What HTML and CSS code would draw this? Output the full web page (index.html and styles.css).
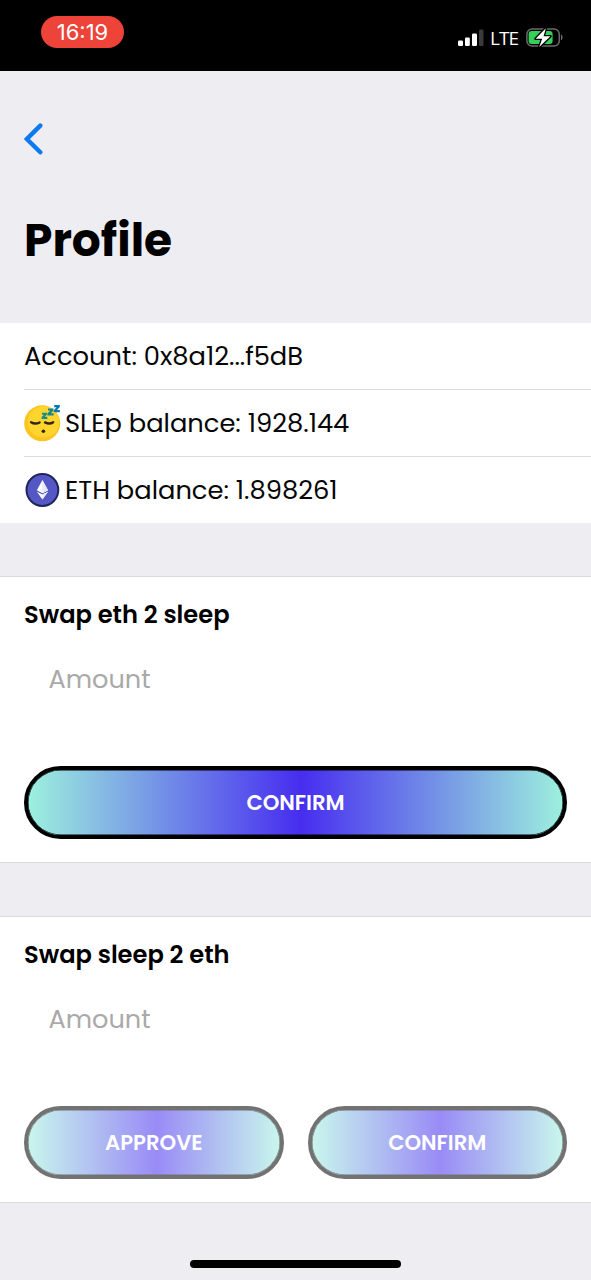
FILE: index.html
```html
<!DOCTYPE html>
<html lang="en">
<head>
<meta charset="utf-8">
<title>Profile</title>
<link rel="stylesheet" href="styles.css">
</head>
<body>
<div class="screen">
  <div class="status">
    <span class="clock">16:19</span>
    <div class="status-right">
      <svg class="signal" width="26" height="18" viewBox="0 0 26 18">
        <rect x="0" y="11.5" width="5" height="5.5" rx="1.2" fill="#fff"/>
        <rect x="7" y="8.5" width="4.8" height="8.5" rx="1.2" fill="#fff"/>
        <rect x="14" y="4.5" width="5" height="12.5" rx="1.2" fill="#fff"/>
        <rect x="21" y="0.5" width="4.5" height="16.5" rx="1.2" fill="#3a3a3c"/>
      </svg>
      <span class="network">LTE</span>
      <svg class="battery" width="38" height="22" viewBox="0 0 38 22">
        <rect x="0.9" y="2" width="32.4" height="17" rx="5.2" fill="none" stroke="#6b6b6e" stroke-width="1.5"/>
        <rect x="2.6" y="4" width="24" height="13" rx="3" fill="#34d058"/>
        <path d="M35.2 7.6c1.7.7 1.7 5 0 5.7z" fill="#8a8a8d"/>
        <path d="M19.8 1.2 9.6 11.7h6.6L13.2 20 24.4 9.2h-6.8z" fill="#fff" stroke="#000" stroke-width="2.6" stroke-linejoin="round" paint-order="stroke"/>
      </svg>
    </div>
  </div>
  <header class="header">
    <svg class="back" width="24" height="36" viewBox="0 0 24 36">
      <path d="M16.3 4.6 2.9 18l13.4 13.3" fill="none" stroke="#0b7af0" stroke-width="4.4" stroke-linecap="round" stroke-linejoin="miter"/>
    </svg>
    <h1 class="title">Profile</h1>
  </header>
  <div class="list">
    <div class="row">Account: 0x8a12...f5dB</div>
    <div class="row">
      <svg class="coin" width="38" height="38" viewBox="0 0 38 38">
        <circle cx="18.2" cy="19.3" r="18" fill="#fdc41f"/>
        <ellipse cx="19.5" cy="17.9" rx="15.8" ry="15.6" fill="#fed52e"/>
        <path d="M7 18.2c2.5 1.5 6.2 1.5 8.6.2M21 18.4c2.6 1.3 6 1.3 8.2-.2" fill="none" stroke="#33251a" stroke-width="2.3" stroke-linecap="round"/>
        <circle cx="19.4" cy="27.3" r="1.8" fill="#33251a"/>
        <path d="M18 8.7h5v1.8l-2.3 2.2h2.6v2.2h-5.7v-1.8l2.4-2.3h-2z" fill="#12908b"/>
        <path d="M24 4.4h5.4v2l-2.6 2.8h2.8v2.3h-6.2V9.600l2.8-3h-2.200z" fill="#10858f"/>
        <path d="M30.200 1h5.600v2L33.100 6h2.800v2.300h-6.200V6.400l2.800-3.100h-2.300z" fill="#0878ae"/>
      </svg>
      <span>SLEp balance: 1928.144</span>
    </div>
    <div class="row">
      <svg class="coin" width="38" height="38" viewBox="0 0 38 38">
        <circle cx="18.4" cy="19" r="15.9" fill="#5558c4" stroke="#20255c" stroke-width="2"/>
        <path d="M18.4 9 12.9 19.2l5.5 3 5.6-3z" fill="#fff"/>
        <path d="M12.9 20.7l5.5 7.7 5.6-7.7-5.6 2.9z" fill="#fff"/>
        <path d="M18.4 9v13.2l5.6-3zM18.4 23.6v4.8l5.6-7.7z" fill="#e8e9fa"/>
      </svg>
      <span>ETH balance: 1.898261</span>
    </div>
  </div>
  <section class="card">
    <h2 class="heading">Swap eth 2 sleep</h2>
    <div class="field">Amount</div>
    <div class="actions"><button class="btn">CONFIRM</button></div>
  </section>
  <section class="card">
    <h2 class="heading">Swap sleep 2 eth</h2>
    <div class="field">Amount</div>
    <div class="actions">
      <button class="btn btn-off">APPROVE</button>
      <button class="btn btn-off">CONFIRM</button>
    </div>
  </section>
  <div class="home"></div>
</div>
</body>
</html>
```
FILE: styles.css
```css
* { box-sizing: border-box; }
body { margin: 0; background: #eeedf2; }
.screen {
  width: 591px; height: 1280px;
  display: flex; flex-direction: column;
  background: #eeedf2; color: #060606;
  font-family: Poppins, Inter, "Liberation Sans", sans-serif;
  white-space: nowrap; overflow: hidden;
}
.status {
  height: 71px; flex: none; background: #000; color: #fff;
  display: flex; justify-content: space-between; align-items: flex-start;
  padding: 16px 27px 0 41px;
}
.clock {
  width: 83px; height: 32px; border-radius: 16px; background: #ee4339;
  font: 400 22px/33px Inter, sans-serif; text-align: center; letter-spacing: 0;
}
.status-right { display: flex; align-items: flex-start; padding-top: 11px; }
.signal { margin-top: 2px; }
.network { font: 400 19px/22px "Open Sans", sans-serif; margin: 0 8px 0 6px; width: 28px; letter-spacing: -1px; }
.header { height: 252px; flex: none; padding: 50px 24px 0; }
.back { display: block; }
.title { margin: 55px 0 0; font-size: 45.5px; line-height: 57px; font-weight: 700; color: #000; }
.list { height: 200px; flex: none; background: #fff; padding-left: 24px; display: grid; grid-template-rows: 66px 67px 67px; }
.row { display: flex; align-items: center; gap: 3px; font-size: 25.75px; font-weight: 400; }
.row + .row { border-top: 1px solid #dcdcde; }
.card {
  height: 287px; flex: none; margin-top: 53px; background: #fff;
  border: solid #dadade; border-width: 1px 0; padding: 22px 24px 0;
}
.heading { margin: 0; font-size: 24.2px; line-height: 32px; font-weight: 600; color: #000; }
.field { padding-left: 24.500px; margin-top: 32px; font-size: 25.6px; line-height: 32px; font-weight: 400; color: #a9a9a9; }
.actions { display: flex; gap: 24px; margin-top: 71px; }
.btn {
  flex: 1; height: 73px; border: 4px solid #000; border-radius: 37px; padding: 0;
  background: linear-gradient(90deg, #9df0de 0%, #472df0 51%, #9df0de 100%);
  box-shadow: inset 0 0 0 0.5px #000;
  color: #fff; font: 600 21.2px/1 Poppins, Inter, sans-serif;
}
.btn-off { opacity: 0.55; }
.home { width: 211px; height: 8px; border-radius: 4px; background: #000; margin: 57px auto 0; }
```
